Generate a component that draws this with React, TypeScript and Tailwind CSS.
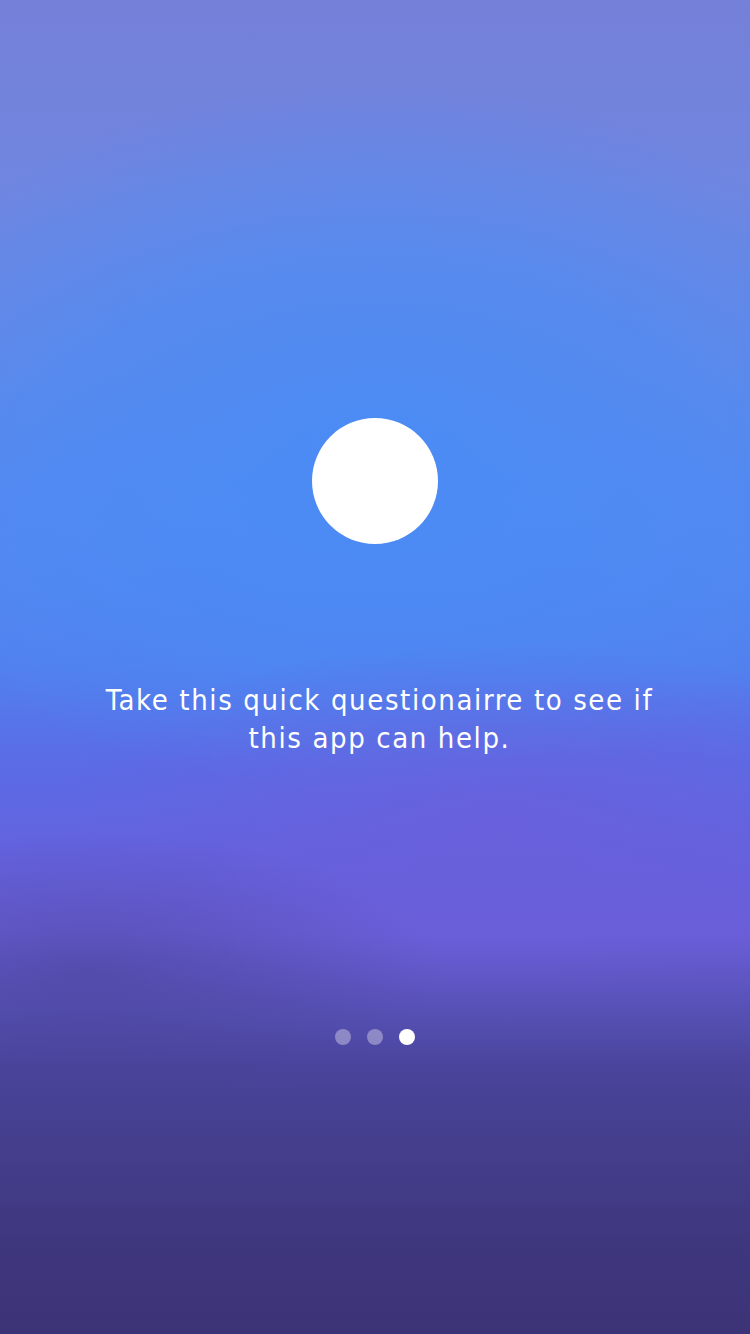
export default function App() {
  const dots = [false, false, true];

  return (
    <div className="relative h-[1334px] w-[750px] overflow-hidden bg-[linear-gradient(180deg,#7580d8_0%,#7086e0_14%,#6488e6_28%,#5888ee_36%,#5486f0_44%,#5280ee_50%,#5a6ce6_57%,#6462de_64%,#6a5ed8_70%,#5650b4_76%,#4a449c_80%,#443e8c_86%,#3f377e_93%,#3c3377_100%)]">
      <div className="absolute left-[-175px] top-[80px] h-[720px] w-[1100px] rounded-full bg-[radial-gradient(ellipse_at_center,rgba(72,140,246,0.85)_0%,rgba(72,140,246,0.5)_40%,rgba(72,140,246,0)_70%)]" />
      <div className="absolute -right-[200px] top-[640px] h-[360px] w-[900px] rounded-full bg-[radial-gradient(ellipse_at_center,rgba(108,94,218,0.7)_0%,rgba(108,94,218,0)_70%)]" />
      <div className="absolute -left-[260px] top-[830px] h-[280px] w-[700px] rounded-full bg-[radial-gradient(ellipse_at_center,rgba(68,62,140,0.45)_0%,rgba(68,62,140,0)_70%)]" />

      <div className="relative flex flex-col items-center">
        <div className="mt-[418px] h-[126px] w-[126px] rounded-full bg-white" />
        <p className="ml-[9px] mt-[137px] w-[566px] text-center font-['DejaVu_Sans_Condensed','Roboto',sans-serif] text-[29px] leading-[38px] tracking-[1.6px] text-white">
          Take this quick questionairre to see if this app can help.
        </p>
        <div className="mt-[272px] flex items-center gap-4">
          {dots.map((active, i) => (
            <span
              key={i}
              className={active ? "h-4 w-4 rounded-full bg-white" : "h-4 w-4 rounded-full bg-white/35"}
            />
          ))}
        </div>
      </div>
    </div>
  );
}
